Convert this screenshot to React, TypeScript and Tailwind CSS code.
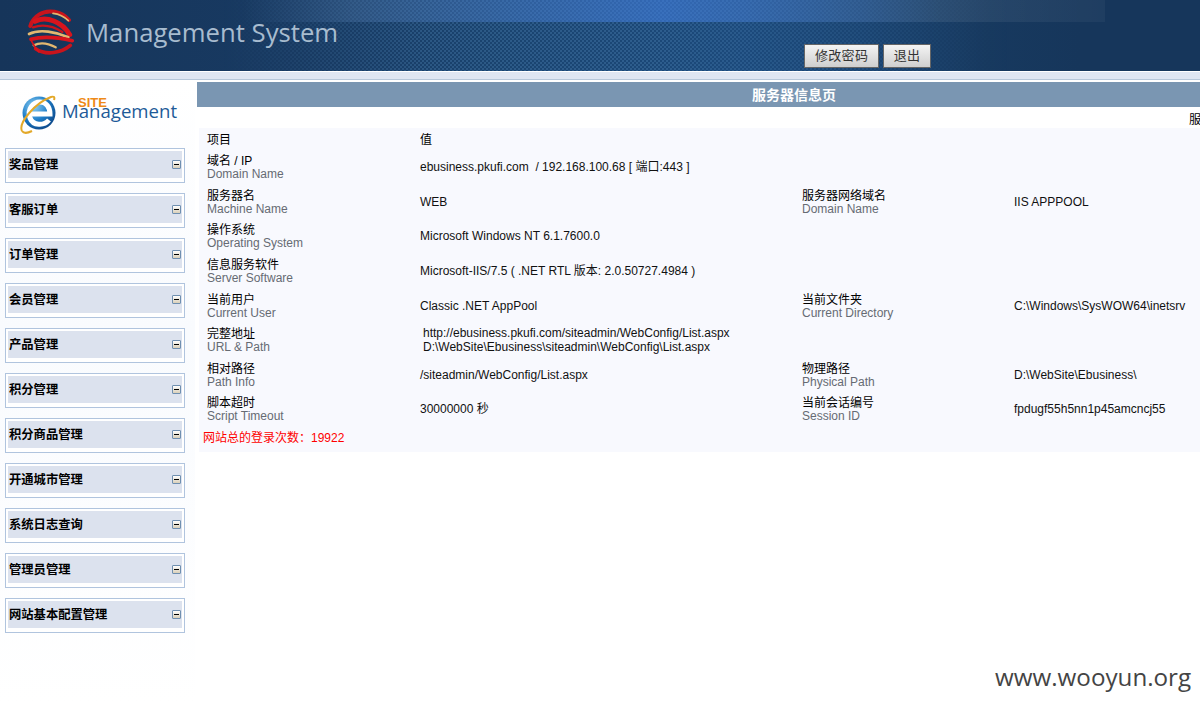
import React from "react";

const FONT = "font-['Liberation_Sans','Noto_Sans_CJK_SC',sans-serif]";

const menu = ["奖品管理", "客服订单", "订单管理", "会员管理", "产品管理", "积分管理", "积分商品管理", "开通城市管理", "系统日志查询", "管理员管理", "网站基本配置管理"];

type Row = { h: string; l: string; le: string; v: React.ReactNode; l2?: string; le2?: string; v2?: string };
const rows: Row[] = [
  { h: "h-[34px]", l: "域名 / IP", le: "Domain Name", v: "ebusiness.pkufi.com\u00a0 / 192.168.100.68 [ 端口:443 ]" },
  { h: "h-[35px]", l: "服务器名", le: "Machine Name", v: "WEB", l2: "服务器网络域名", le2: "Domain Name", v2: "IIS APPPOOL" },
  { h: "h-[34px]", l: "操作系统", le: "Operating System", v: "Microsoft Windows NT 6.1.7600.0" },
  { h: "h-[35px]", l: "信息服务软件", le: "Server Software", v: "Microsoft-IIS/7.5 ( .NET RTL 版本: 2.0.50727.4984 )" },
  { h: "h-[35px]", l: "当前用户", le: "Current User", v: "Classic .NET AppPool", l2: "当前文件夹", le2: "Current Directory", v2: "C:\\Windows\\SysWOW64\\inetsrv" },
  { h: "h-[34px]", l: "完整地址", le: "URL & Path", v: <div className="pl-[3px]"><div className="h-[14px]">http://ebusiness.pkufi.com/siteadmin/WebConfig/List.aspx</div><div className="h-[14px]">D:\WebSite\Ebusiness\siteadmin\WebConfig\List.aspx</div></div> },
  { h: "h-[35px]", l: "相对路径", le: "Path Info", v: "/siteadmin/WebConfig/List.aspx", l2: "物理路径", le2: "Physical Path", v2: "D:\\WebSite\\Ebusiness\\" },
  { h: "h-[34px]", l: "脚本超时", le: "Script Timeout", v: "30000000 秒", l2: "当前会话编号", le2: "Session ID", v2: "fpdugf55h5nn1p45amcncj55" },
];

function Label({ l, le }: { l: string; le: string }) {
  return (
    <div>
      <div className="h-[14px] leading-[16px] text-black">{l}</div>
      <div className="h-[14px] leading-[14px] text-[#666b73]">{le}</div>
    </div>
  );
}

function Globe() {
  return (
    <svg width="48" height="48" viewBox="22 15 144 144" className="shrink-0">
      <g fill="none" strokeLinecap="round">
        <path d="M148 48 C125 22 85 14 58 32 C45 40 36 52 32 66" stroke="#c8141c" strokeWidth="12" />
        <path d="M100 28 C118 30 134 38 146 50" stroke="#e3b870" strokeWidth="5" />
        <path d="M46 52 C80 34 128 54 150 92" stroke="#d8141c" strokeWidth="15" />
        <path d="M40 70 C70 60 100 66 128 84" stroke="#c8141c" strokeWidth="7" />
        <path d="M28 90 C60 74 110 84 146 100" stroke="#e3b870" strokeWidth="8" />
        <path d="M34 106 C70 96 122 102 158 110" stroke="#d8141c" strokeWidth="11" />
        <path d="M42 124 C62 114 86 118 108 130" stroke="#e3b870" strokeWidth="7" />
        <path d="M48 134 C80 156 126 146 152 124" stroke="#c8141c" strokeWidth="11" />
        <path d="M36 112 C42 124 48 134 58 144" stroke="#d8141c" strokeWidth="5" />
      </g>
    </svg>
  );
}

function IeLogo() {
  return (
    <svg width="43" height="44" viewBox="0 0 43 44" className="shrink-0">
      <defs>
        <radialGradient id="ieb" cx="0.35" cy="0.3" r="0.85">
          <stop offset="0" stopColor="#8fd0f2" />
          <stop offset="0.5" stopColor="#1c7cc8" />
          <stop offset="1" stopColor="#0a3a78" />
        </radialGradient>
      </defs>
      <circle cx="20" cy="20" r="16.5" fill="url(#ieb)" />
      <path d="M30 27 C25 33 14 33 11 25 C8 16 14 9 21 9 C27 9 31 14 31 21 H11" fill="none" stroke="#fff" strokeWidth="5" />
      <path d="M3 38 C-1 30 16 10 32 4 C35 3 36 4 35 7" fill="none" stroke="#e3a828" strokeWidth="2" />
      <path d="M3 38 C5 41 9 40 13 38" fill="none" stroke="#e3a828" strokeWidth="2" />
    </svg>
  );
}

function MinusIcon() {
  return (
    <span className="flex h-[9px] w-[9px] items-center justify-center rounded-[1px] border border-[#6f8fb0] bg-gradient-to-b from-white to-[#d9cfb8]">
      <span className="h-px w-[5px] bg-black" />
    </span>
  );
}

export default function App() {
  return (
    <div className={`${FONT} relative h-[705px] w-[1200px] overflow-hidden bg-white text-[12px] text-black`}>
      {/* header */}
      <header className="relative flex h-[71px] items-start bg-[linear-gradient(90deg,#16355a_0%,#183a62_25%,#1a4470_42%,#1c4a7c_62%,#1a4472_72%,#17395f_82%,#16365b_90%,#16365b_100%)]">
        <div className="absolute left-0 top-0 h-full w-[1010px] bg-[repeating-conic-gradient(rgba(110,170,220,0.22)_0%_25%,transparent_0%_50%)] bg-[length:4px_4px] [mask-image:linear-gradient(90deg,transparent_22%,black_42%,black_65%,transparent_100%)]" />
        <div className="absolute left-0 top-0 h-[22px] w-[1105px] bg-[linear-gradient(90deg,transparent_22%,rgba(80,120,170,0.35)_32%,rgba(65,125,220,0.6)_60%,rgba(255,255,255,0.08)_85%,rgba(255,255,255,0.04)_100%)]" />
        <div className="relative ml-[27px] mt-[9px]"><Globe /></div>
        <div className="relative ml-[11px] mt-[13px] font-['Open_Sans',sans-serif] text-[25.7px] leading-[40px] text-[#a8bccf]">Management System</div>
        <div className="relative ml-[466px] mt-[44px] flex gap-1">
          <button className="h-[24px] w-[75px] border border-[#666] bg-gradient-to-b from-[#f4f4f4] to-[#cfcfcf] text-[13px] tracking-[0.3px] text-[#333]">修改密码</button>
          <button className="h-[24px] w-[48px] border border-[#666] bg-gradient-to-b from-[#f4f4f4] to-[#cfcfcf] text-[13px] tracking-[0.3px] text-[#333]">退出</button>
        </div>
      </header>
      <div className="h-[9px] border-t border-b border-t-white border-b-[#b8c8da] bg-[#dfe6f2]" />

      <div className="flex">
        {/* sidebar */}
        <aside className="flex h-[625px] w-[195px] shrink-0 flex-col bg-gradient-to-b from-white via-[#f9fbfe] via-40% to-white">
          <div className="flex h-[68px] items-start pl-[19px] pt-[13px]">
            <IeLogo />
            <div className="relative mt-[6px] font-['Open_Sans',sans-serif] text-[18.6px] leading-[24px] text-[#1d5a98]">
              Management
              <span className="absolute left-[16px] top-[-2px] font-['Liberation_Sans',sans-serif] text-[13px] font-bold leading-[12px] text-[#ee8a18]">SITE</span>
            </div>
          </div>
          <nav className="flex flex-col gap-[10px] pl-[5px]">
            {menu.map((m) => (
              <div key={m} className="h-[35px] w-[180px] border border-[#b0c4de] bg-white px-[2px] pt-[2px]">
                <div className="flex h-[27px] items-center justify-between bg-[#dce2ee] pl-[1px] pr-[1px]">
                  <span className="pt-[2px] text-[12.3px] font-bold text-black">{m}</span>
                  <MinusIcon />
                </div>
              </div>
            ))}
          </nav>
        </aside>

        {/* main */}
        <main className="min-w-0 flex-1 pl-[2px] pt-[2px]">
          <div className="h-[25px] bg-[#7a96b2] pl-[555px] text-[14px] font-bold leading-[26px] text-white">服务器信息页</div>
          <div className="h-[21px] overflow-hidden whitespace-nowrap pl-[992px] pt-[5px] leading-[16px]">服务器信息</div>
          <div className="ml-[2px] h-[324px] bg-[#f8f9fe] pl-[8px] pt-[4px]">
            <div className="grid h-[18px] grid-cols-[213px_1fr] items-start">
              <div className="h-[16px] leading-[16px]">项目</div>
              <div className="h-[16px] leading-[16px]">值</div>
            </div>
            {rows.map((r) => (
              <div key={r.l} className={`grid ${r.h} grid-cols-[213px_382px_212px_1fr] items-center whitespace-nowrap`}>
                <Label l={r.l} le={r.le} />
                <div className="leading-[14px] text-[#111]">{r.v}</div>
                {r.l2 ? <Label l={r.l2} le={r.le2 ?? ""} /> : <div />}
                <div className="text-[#111]">{r.v2}</div>
              </div>
            ))}
            <div className="-ml-[4px] mt-[4px] leading-[16px] text-[#f00]">网站总的登录次数：19922</div>
          </div>
        </main>
      </div>

      <div className="absolute left-[995px] top-[660px] font-['Open_Sans',sans-serif] text-[24.2px] leading-[34px] text-[#444]">www.wooyun.org</div>
    </div>
  );
}
